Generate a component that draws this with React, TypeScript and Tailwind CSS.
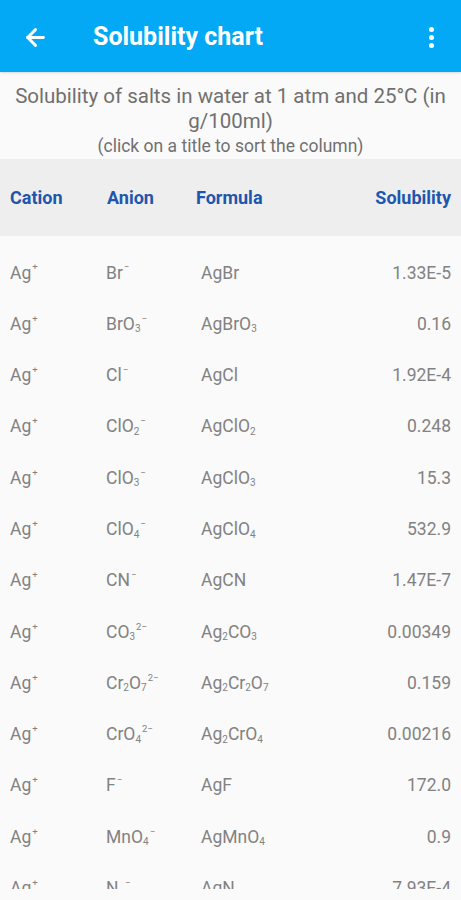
import { ArrowLeft } from "lucide-react";

type Part = { t: string; sub?: boolean; sup?: boolean };

// tiny formula markup: _2 = subscript, ^2- = superscript charge
function parse(s: string): Part[] {
  const parts: Part[] = [];
  let i = 0;
  while (i < s.length) {
    const c = s[i];
    if (c === "_") {
      parts.push({ t: s[i + 1], sub: true });
      i += 2;
    } else if (c === "^") {
      let j = i + 1;
      let txt = "";
      while (j < s.length && /[0-9+\-]/.test(s[j])) {
        txt += s[j] === "-" ? "\u2212" : s[j];
        j++;
      }
      parts.push({ t: txt, sup: true });
      i = j;
    } else {
      parts.push({ t: c });
      i++;
    }
  }
  return parts;
}

function Chem({ f }: { f: string }) {
  return (
    <span>
      {parse(f).map((p, i) =>
        p.sub ? (
          <sub key={i} className="text-[10px]">
            {p.t}
          </sub>
        ) : p.sup ? (
          <sup key={i} className="text-[9.5px] top-[-0.85em] pl-[1px]">
            {p.t}
          </sup>
        ) : (
          <span key={i}>{p.t}</span>
        )
      )}
    </span>
  );
}

const rows = [
  ["Ag^+", "Br^-", "AgBr", "1.33E-5"],
  ["Ag^+", "BrO_3^-", "AgBrO_3", "0.16"],
  ["Ag^+", "Cl^-", "AgCl", "1.92E-4"],
  ["Ag^+", "ClO_2^-", "AgClO_2", "0.248"],
  ["Ag^+", "ClO_3^-", "AgClO_3", "15.3"],
  ["Ag^+", "ClO_4^-", "AgClO_4", "532.9"],
  ["Ag^+", "CN^-", "AgCN", "1.47E-7"],
  ["Ag^+", "CO_3^2-", "Ag_2CO_3", "0.00349"],
  ["Ag^+", "Cr_2O_7^2-", "Ag_2Cr_2O_7", "0.159"],
  ["Ag^+", "CrO_4^2-", "Ag_2CrO_4", "0.00216"],
  ["Ag^+", "F^-", "AgF", "172.0"],
  ["Ag^+", "MnO_4^-", "AgMnO_4", "0.9"],
  ["Ag^+", "N_3^-", "AgN_3", "7.93E-4"],
  ["Ag^+", "NO_2^-", "AgNO_2", "0.34"],
];

export default function App() {
  return (
    <div
      className="w-[461px] h-[900px] overflow-hidden bg-[#fafafa] flex flex-col"
      style={{ fontFamily: "Roboto, 'Liberation Sans', sans-serif" }}
    >
      <header className="h-[72px] shrink-0 bg-[#03a9f4] flex items-center text-white shadow-sm">
        <div className="w-[93px] pl-[22px] pt-[2px]">
          <ArrowLeft size={27} strokeWidth={2.6} />
        </div>
        <h1 className="flex-1 text-[25px] font-bold pt-[2px]">Solubility chart</h1>
        <div className="w-[56px] flex flex-col items-center gap-[3px] pr-[3px] pt-[2px]">
          <span className="w-[5px] h-[5px] rounded-full bg-white" />
          <span className="w-[5px] h-[5px] rounded-full bg-white" />
          <span className="w-[5px] h-[5px] rounded-full bg-white" />
        </div>
      </header>

      <div className="pt-[12px] text-center text-[#707070] shrink-0">
        <p className="text-[20.5px] leading-[25px] px-[8px]">
          Solubility of salts in water at 1 atm and 25°C (in g/100ml)
        </p>
        <p className="text-[17.5px] leading-[25px]">(click on a title to sort the column)</p>
      </div>

      <div className="h-[77px] shrink-0 bg-[#eeeeee] flex items-center px-[10px] text-[18px] font-bold text-[#1e56ad]">
        <span className="w-[97px]">Cation</span>
        <span className="w-[89px]">Anion</span>
        <span className="flex-1">Formula</span>
        <span>Solubility</span>
      </div>

      <div className="flex-1 min-h-0 overflow-hidden pt-[11px] pb-[11px]">
        <div className="h-full overflow-hidden">
          {rows.map((r, i) => (
            <div
              key={i}
              className="h-[51.3px] flex items-center px-[10px] text-[17.5px] text-[#828282]"
            >
              <span className="w-[96px]">
                <Chem f={r[0]} />
              </span>
              <span className="w-[95px]">
                <Chem f={r[1]} />
              </span>
              <span className="flex-1">
                <Chem f={r[2]} />
              </span>
              <span className="text-right">{r[3]}</span>
            </div>
          ))}
        </div>
      </div>
    </div>
  );
}
